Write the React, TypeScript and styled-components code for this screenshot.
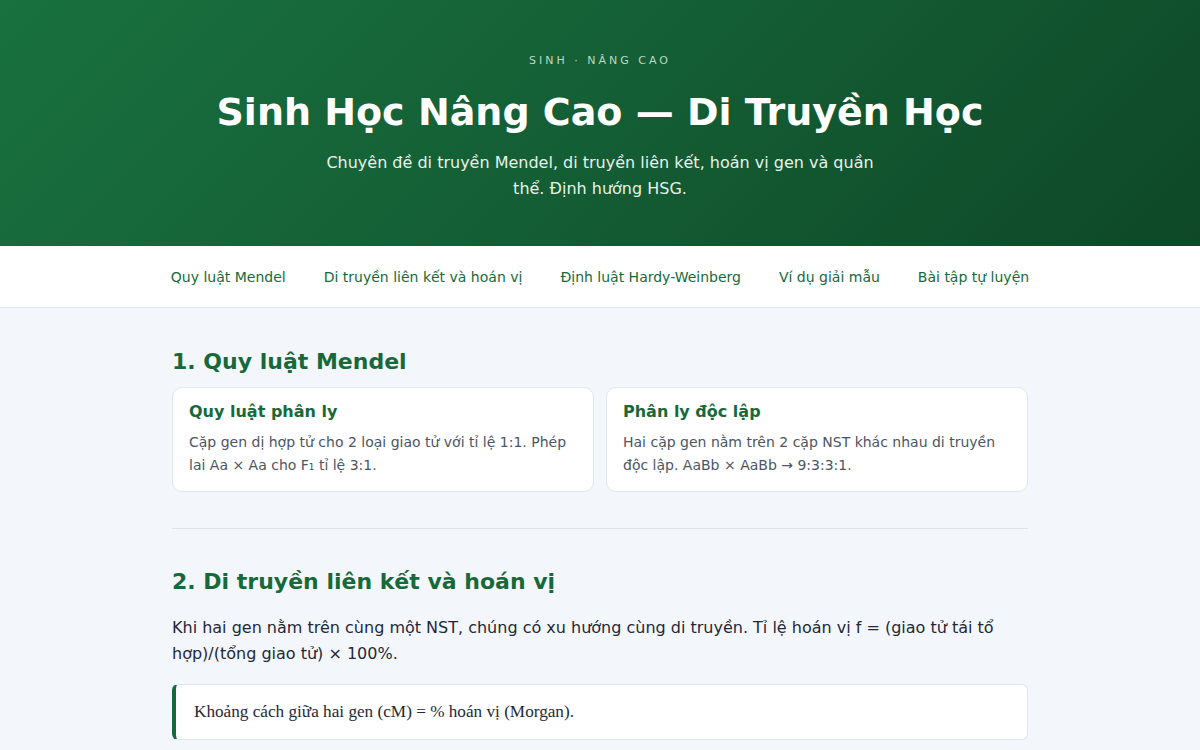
import styled, { createGlobalStyle } from 'styled-components';

const GlobalStyle = createGlobalStyle`
  * { box-sizing: border-box; }
  body {
    margin: 0;
    background: #f3f6fb;
    font-family: "DejaVu Sans", "Noto Sans", sans-serif;
    color: #1f2937;
  }
`;

const Hero = styled.header`
  background: linear-gradient(135deg, #19713f 0%, #145e35 50%, #0e4826 100%);
  color: #fff;
  text-align: center;
  padding: 53px 24px 44px;
`;

const Eyebrow = styled.div`
  font-size: 11px;
  line-height: 16px;
  letter-spacing: 3px;
  text-transform: uppercase;
  color: #b9d9c4;
  margin-bottom: 19px;
`;

const Title = styled.h1`
  margin: 0 0 14px;
  font-size: 38px;
  line-height: 48px;
  font-weight: 700;
`;

const Subtitle = styled.p`
  margin: 0 auto;
  max-width: 570px;
  font-size: 16px;
  line-height: 26px;
  color: #e6f2ea;
`;

const Nav = styled.nav`
  background: #fff;
  border-bottom: 1px solid #e2e6ee;
  height: 62px;
  display: flex;
  justify-content: center;
  align-items: center;
  gap: 38px;
`;

const NavLink = styled.a`
  font-size: 14px;
  color: #166a3a;
  text-decoration: none;
`;

const Main = styled.main`
  max-width: 856px;
  margin: 0 auto;
  padding-top: 40px;
`;

const Section = styled.section`
  & + & {
    border-top: 1px solid #dfe4ec;
    margin-top: 36px;
    padding-top: 39px;
  }
`;

const SectionTitle = styled.h2<{ $gap: number }>`
  margin: 0 0 ${({ $gap }) => $gap}px;
  font-size: 22px;
  line-height: 28px;
  font-weight: 700;
  color: #166a3a;
`;

const CardGrid = styled.div`
  display: grid;
  grid-template-columns: 1fr 1fr;
  gap: 12px;
`;

const Card = styled.article`
  background: #fff;
  border: 1px solid #e0e5ee;
  border-radius: 10px;
  padding: 13px 16px 14px;
`;

const CardTitle = styled.h3`
  margin: 0 0 8px;
  font-size: 16px;
  line-height: 22px;
  font-weight: 700;
  color: #166a3a;
`;

const CardText = styled.p`
  margin: 0;
  font-size: 14px;
  line-height: 23px;
  color: #4b5563;
`;

const Paragraph = styled.p`
  margin: 0 0 17px;
  font-size: 16px;
  line-height: 26px;
  color: #1f2937;
`;

const Quote = styled.blockquote`
  margin: 0;
  background: #fff;
  border: 1px solid #e0e5ee;
  border-left: 4px solid #166a3a;
  border-radius: 6px;
  padding: 14px 18px;
  font-family: "Liberation Serif", "Times New Roman", serif;
  font-size: 17.2px;
  line-height: 26px;
  color: #1f2937;
`;

const links = [
  'Quy luật Mendel',
  'Di truyền liên kết và hoán vị',
  'Định luật Hardy-Weinberg',
  'Ví dụ giải mẫu',
  'Bài tập tự luyện',
];

const cards = [
  {
    title: 'Quy luật phân ly',
    text: 'Cặp gen dị hợp tử cho 2 loại giao tử với tỉ lệ 1:1. Phép lai Aa × Aa cho F₁ tỉ lệ 3:1.',
  },
  {
    title: 'Phân ly độc lập',
    text: 'Hai cặp gen nằm trên 2 cặp NST khác nhau di truyền độc lập. AaBb × AaBb → 9:3:3:1.',
  },
];

export default function App() {
  return (
    <>
      <GlobalStyle />
      <Hero>
        <Eyebrow>Sinh · Nâng cao</Eyebrow>
        <Title>Sinh Học Nâng Cao — Di Truyền Học</Title>
        <Subtitle>
          Chuyên đề di truyền Mendel, di truyền liên kết, hoán vị gen và quần thể. Định hướng HSG.
        </Subtitle>
      </Hero>
      <Nav>
        {links.map((l) => (
          <NavLink key={l} href="#">{l}</NavLink>
        ))}
      </Nav>
      <Main>
        <Section>
          <SectionTitle $gap={11}>1. Quy luật Mendel</SectionTitle>
          <CardGrid>
            {cards.map((c) => (
              <Card key={c.title}>
                <CardTitle>{c.title}</CardTitle>
                <CardText>{c.text}</CardText>
              </Card>
            ))}
          </CardGrid>
        </Section>
        <Section>
          <SectionTitle $gap={19}>2. Di truyền liên kết và hoán vị</SectionTitle>
          <Paragraph>
            Khi hai gen nằm trên cùng một NST, chúng có xu hướng cùng di truyền. Tỉ lệ hoán vị f = (giao tử tái tổ hợp)/(tổng giao tử) × 100%.
          </Paragraph>
          <Quote>Khoảng cách giữa hai gen (cM) = % hoán vị (Morgan).</Quote>
        </Section>
      </Main>
    </>
  );
}
